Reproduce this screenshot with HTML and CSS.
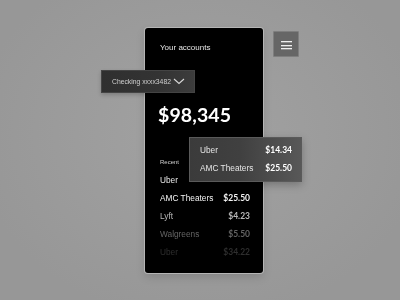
FILE: index.html
```html
<!DOCTYPE html>
<html>
<head>
<meta charset="utf-8">
<link rel="stylesheet" href="styles.css">
</head>
<body>
<div class="stage">
  <div class="card">
    <div class="title">Your accounts</div>
    <div class="balance">$98,345</div>
    <div class="recent">Recent</div>
    <ul class="list">
      <li class="row r1"><span>Uber</span><span class="amt"></span></li>
      <li class="row r2"><span>AMC Theaters</span><span class="amt">$25.50</span></li>
      <li class="row r3"><span>Lyft</span><span class="amt">$4.23</span></li>
      <li class="row r4"><span>Walgreens</span><span class="amt">$5.50</span></li>
      <li class="row r5"><span>Uber</span><span class="amt">$34.22</span></li>
    </ul>
  </div>
  <button class="menu" aria-label="Menu">
    <span class="bar"></span><span class="bar"></span><span class="bar"></span>
  </button>

  <div class="dropdown">
    <span>Checking xxxx3482</span>
    <svg class="chev" width="12" height="7" viewBox="0 0 12 7"><path d="M1 1 L6 5.5 L11 1" fill="none" stroke="#d8d8d8" stroke-width="1.1"/></svg>
  </div>

  <div class="popup">
    <div class="prow"><span>Uber</span><span class="pamt">$14.34</span></div>
    <div class="prow"><span>AMC Theaters</span><span class="pamt">$25.50</span></div>
  </div>
</div>
</body>
</html>
```
FILE: styles.css
```css
html, body {
  margin: 0;
  padding: 0;
}
body {
  background: #9b9b9b;
  font-family: "Liberation Sans", Arial, sans-serif;
  -webkit-font-smoothing: antialiased;
}
.stage {
  position: relative;
  width: 400px;
  height: 300px;
  box-sizing: border-box;
  padding: 28px 0 0 145px;
  display: flex;
  align-items: flex-start;
  gap: 10px;
  background: radial-gradient(ellipse at 50% 45%, #a2a2a2 0%, #979797 80%);
  will-change: transform;
}
.card {
  width: 118px;
  height: 245px;
  box-sizing: border-box;
  background: #000;
  border-radius: 3px;
  box-shadow: 0 0 0 1px #b5b5b5, 0 4px 10px rgba(0,0,0,0.15);
  padding: 15px 13px 0 15px;
  color: #fff;
}
.title {
  font-size: 8px;
  line-height: 10px;
  color: #e6e6e6;
}
.balance {
  margin-top: 52px;
  font-family: Lato, "Liberation Sans", sans-serif;
  font-weight: 700;
  font-size: 19.5px;
  line-height: 20px;
  letter-spacing: 0.1px;
  margin-left: -2px;
  color: #fff;
}
.recent {
  margin-top: 33px;
  font-size: 6px;
  line-height: 8px;
  color: #d0d0d0;
}
.list {
  list-style: none;
  margin: 5px 0 0 0;
  padding: 0;
}
.row {
  display: flex;
  justify-content: space-between;
  align-items: center;
  height: 18px;
  font-size: 8.3px;
}
.amt {
  font-family: Lato, "Liberation Sans", sans-serif;
  font-weight: 700;
  font-size: 8.5px;
}
.r1 { color: #e8e8e8; }
.r2 { color: #f4f4f4; }
.r3 { color: #b8b8b8; }
.r4 { color: #646464; }
.r5 { color: #2e2e2e; }
.menu {
  margin-top: 3px;
  width: 26px;
  height: 26px;
  box-sizing: border-box;
  background: #666;
  border: 1px solid #7e7e7e;
  border-radius: 1px;
  padding: 2px 0 0 0;
  display: flex;
  flex-direction: column;
  align-items: center;
  justify-content: center;
  gap: 2.5px;
}
.bar {
  display: block;
  width: 11px;
  height: 1px;
  background: #f0f0f0;
  box-shadow: 0 0.5px 0 #bbb;
}
.dropdown {
  position: absolute;
  left: 101px;
  top: 70px;
  width: 94px;
  height: 23px;
  box-sizing: border-box;
  padding: 0 9px 0 10px;
  background: linear-gradient(90deg, #2f2f2f, #333 60%, #3c3c3c);
  border: 1px solid #444;
  display: flex;
  align-items: center;
  justify-content: space-between;
  font-size: 6.8px;
  color: #cfcfcf;
  box-shadow: 0 2px 4px rgba(0,0,0,0.2);
}
.chev { display: block; }
.popup {
  position: absolute;
  left: 189px;
  top: 137px;
  width: 113px;
  height: 45px;
  box-sizing: border-box;
  padding: 3px 9px 0 10px;
  background: linear-gradient(90deg, #3b3b3b 0%, #404040 45%, #585858 100%);
  border: 1px solid #5a5a5a;
  box-shadow: 0 3px 8px rgba(0,0,0,0.25);
  color: #e6e6e6;
}
.prow {
  display: flex;
  justify-content: space-between;
  align-items: center;
  height: 18px;
  font-size: 8.3px;
}
.pamt {
  font-family: Lato, "Liberation Sans", sans-serif;
  font-weight: 700;
  font-size: 8.5px;
  color: #fff;
}
```
